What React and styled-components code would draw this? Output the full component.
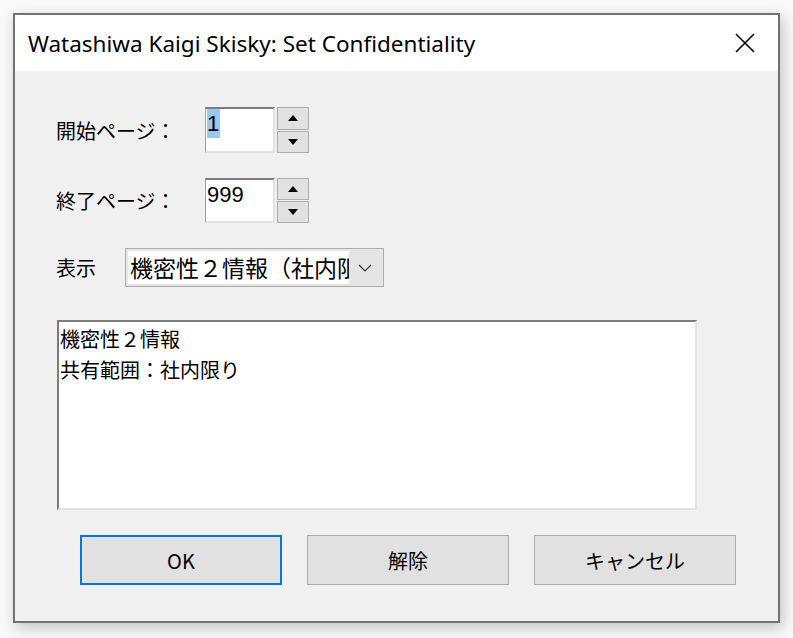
import styled, { createGlobalStyle } from 'styled-components';

const Global = createGlobalStyle`
  html, body {
    margin: 0;
    padding: 0;
    background: #f9f9f9;
  }
  body {
    width: 793px;
    height: 638px;
    overflow: hidden;
  }
`;

const cjk = `"Noto Sans CJK JP", "Noto Sans", sans-serif`;

const Page = styled.div`
  padding: 13px 0 0 13px;
`;

const Window = styled.div`
  box-sizing: border-box;
  width: 767px;
  height: 610px;
  border: 2px solid #727272;
  background: #f0f0f0;
  box-shadow: 3px 5px 14px rgba(0, 0, 0, 0.22);
  display: flex;
  flex-direction: column;
`;

const TitleBar = styled.div`
  height: 56px;
  background: #ffffff;
  display: flex;
  align-items: center;
  justify-content: space-between;
  padding: 0 22px 0 13px;
`;

const Title = styled.div`
  font-family: "Noto Sans", "Open Sans", sans-serif;
  font-size: 22.5px;
  color: #000;
`;

const Close = styled.div`
  width: 22px;
  height: 22px;
  display: flex;
  align-items: center;
  justify-content: center;
`;

const Body = styled.div`
  flex: 1;
  padding: 36px 0 0 41px;
  display: flex;
  flex-direction: column;
`;

const Row = styled.div`
  display: flex;
  align-items: center;
  height: ${(p) => p.$h || 46}px;
  margin-bottom: ${(p) => p.$mb || 0}px;
`;

const Label = styled.div`
  width: ${(p) => p.$w}px;
  font-family: ${cjk};
  font-size: 20px;
  color: #000;
`;

const Input = styled.div`
  box-sizing: border-box;
  width: 70px;
  height: 100%;
  background: #fff;
  border-style: solid;
  border-width: 2px 2px 2px 1px;
  border-color: #7c7c7c #e3e3e3 #e3e3e3 #a0a0a0;
  font-family: "Liberation Sans", Arial, sans-serif;
  font-size: 22px;
  line-height: 29px;
  padding: 0 0 0 1px;
  color: #000;
`;

const Selected = styled.span`
  background: #99c9ef;
  display: inline-block;
  padding-right: 1px;
`;

const SpinCol = styled.div`
  display: flex;
  flex-direction: column;
  margin-left: 2px;
  height: 100%;
`;

const SpinBtn = styled.div`
  box-sizing: border-box;
  width: 32px;
  flex: 1;
  background: #e1e1e1;
  border: 1px solid #adadad;
  display: flex;
  align-items: center;
  justify-content: center;
  & + & {
    margin-top: 1px;
  }
`;

const Triangle = styled.div`
  width: 0;
  height: 0;
  border-left: 5px solid transparent;
  border-right: 5px solid transparent;
  ${(p) => (p.$up ? 'border-bottom: 6px solid #000;' : 'border-top: 6px solid #000;')}
`;

const Select = styled.div`
  box-sizing: border-box;
  width: 259px;
  height: 39px;
  border: 1px solid #adadad;
  background: #e5e5e5;
  display: flex;
  align-items: stretch;
  padding: 2px;
`;

const SelectValue = styled.div`
  width: 219px;
  background: #fff;
  overflow: hidden;
  white-space: nowrap;
  font-family: ${cjk};
  font-size: 23px;
  line-height: 33px;
  padding-left: 2px;
  color: #000;
`;

const Chevron = styled.div`
  flex: 1;
  display: flex;
  align-items: center;
  justify-content: center;
`;

const TextArea = styled.div`
  box-sizing: border-box;
  width: 640px;
  height: 190px;
  margin-left: 1px;
  background: #fff;
  border-style: solid;
  border-width: 2px;
  border-color: #7c7c7c #e3e3e3 #e3e3e3 #7c7c7c;
  padding: 1px 0 0 1px;
  font-family: ${cjk};
  font-size: 20px;
  line-height: 31px;
  color: #000;
`;

const Buttons = styled.div`
  display: flex;
  gap: 25px;
  margin: 25px 0 0 24px;
`;

const Button = styled.div`
  box-sizing: border-box;
  width: 202px;
  height: 50px;
  background: #e1e1e1;
  border: ${(p) => (p.$default ? '2px solid #0078d7' : '1px solid #adadad')};
  display: flex;
  align-items: center;
  justify-content: center;
  font-family: ${cjk};
  font-size: 20px;
  color: #000;
`;

const Spinner = ({ value, selected }) => (
  <>
    <Input>{selected ? <Selected>{value}</Selected> : value}</Input>
    <SpinCol>
      <SpinBtn>
        <Triangle $up />
      </SpinBtn>
      <SpinBtn>
        <Triangle />
      </SpinBtn>
    </SpinCol>
  </>
);

export default function App() {
  return (
    <Page>
      <Global />
      <Window>
        <TitleBar>
          <Title>Watashiwa Kaigi Skisky: Set Confidentiality</Title>
          <Close>
            <svg width="20" height="20" viewBox="0 0 20 20">
              <path d="M1 1 L19 19 M19 1 L1 19" stroke="#000" strokeWidth="1.6" fill="none" />
            </svg>
          </Close>
        </TitleBar>
        <Body>
          <Row $mb={25}>
            <Label $w={149}>開始ページ：</Label>
            <Spinner value="1" selected />
          </Row>
          <Row $h={45} $mb={25}>
            <Label $w={149}>終了ページ：</Label>
            <Spinner value="999" />
          </Row>
          <Row $h={39} $mb={33}>
            <Label $w={69}>表示</Label>
            <Select>
              <SelectValue>機密性２情報（社内限り）</SelectValue>
              <Chevron>
                <svg width="14" height="8" viewBox="0 0 14 8">
                  <path d="M1 1 L7 7 L13 1" stroke="#333" strokeWidth="1.2" fill="none" />
                </svg>
              </Chevron>
            </Select>
          </Row>
          <TextArea>
            機密性２情報
            <br />
            共有範囲：社内限り
          </TextArea>
          <Buttons>
            <Button $default>OK</Button>
            <Button>解除</Button>
            <Button>キャンセル</Button>
          </Buttons>
        </Body>
      </Window>
    </Page>
  );
}
